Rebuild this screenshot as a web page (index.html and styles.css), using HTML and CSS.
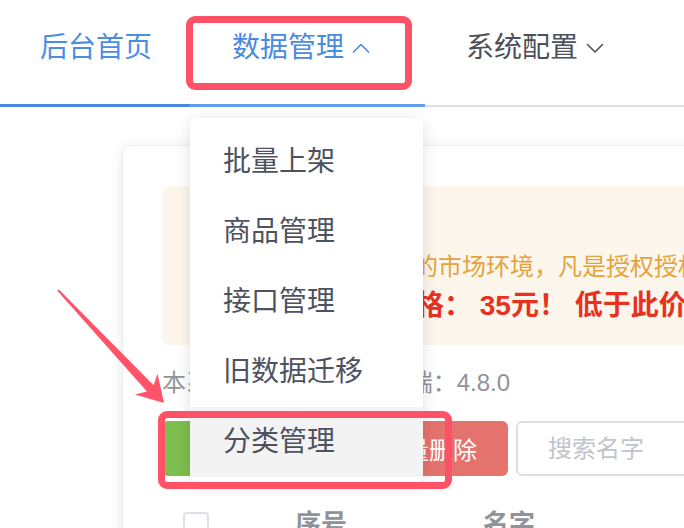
FILE: index.html
```html
<!DOCTYPE html>
<html lang="zh-CN">
<head>
<meta charset="utf-8">
<title>数据管理</title>
<link rel="stylesheet" href="styles.css">
</head>
<body>
<nav class="nav">
  <div class="tab tab-home">后台首页</div>
  <div class="tab tab-data">数据管理<svg class="chev" viewBox="0 0 18 10" width="18" height="10"><polyline points="1.5,9 9,1.5 16.5,9"/></svg></div>
  <div class="tab tab-sys">系统配置<svg class="chev" viewBox="0 0 18 10" width="18" height="10"><polyline points="1.5,1.5 9,9 16.5,1.5"/></svg></div>
</nav>

<main class="main">
  <section class="card">
    <div class="alert">
      <p class="alert-line">为维护正版授权用户的市场环境，凡是授权授权用户均可享受免费升级服务</p>
      <p class="alert-strong">本系统最低授权价格： 35元！ 低于此价格均为盗版</p>
    </div>
    <p class="version">本系统版本号 当前客户端：4.8.0</p>
    <div class="toolbar">
      <button class="btn btn-green">批量上架</button>
      <button class="btn btn-red">批量删除</button>
      <input class="search" type="text" placeholder="搜索名字">
    </div>
    <div class="thead">
      <span class="checkbox"></span>
      <span class="th th-index">序号</span>
      <span class="th">名字</span>
    </div>
  </section>
</main>

<ul class="dropdown">
  <li class="dd-item">批量上架</li>
  <li class="dd-item">商品管理</li>
  <li class="dd-item">接口管理</li>
  <li class="dd-item">旧数据迁移</li>
  <li class="dd-item dd-item-hover">分类管理</li>
</ul>

<div class="mark mark-nav"></div>
<div class="mark mark-item"></div>
<svg class="arrow" viewBox="0 0 684 528" width="684" height="528">
  <polygon points="57.3,290.7 147.0,391.5 134.9,394.6 164,403 157.5,373.4 153.6,385.3 58.7,289.3"/>
</svg>
</body>
</html>
```

FILE: styles.css
```css
* { box-sizing: border-box; }

html, body {
  margin: 0;
  padding: 0;
}

body {
  width: 684px;
  height: 528px;
  overflow: hidden;
  position: relative;
  background: #ffffff;
  font-family: "Liberation Sans", "Noto Sans CJK SC", sans-serif;
  color: #4c505a;
}

p { margin: 0; }

/* ---------- top nav ---------- */
.nav {
  display: flex;
  height: 107px;
}

.tab {
  height: 107px;
  display: flex;
  align-items: center;
  font-size: 28px;
  line-height: 40px;
  padding-bottom: 8px;
  white-space: nowrap;
}

.tab-home {
  width: 190px;
  padding-left: 40px;
  color: #4a8ee4;
  border-bottom: 3px solid #4a87db;
}

.tab-data {
  width: 235px;
  padding-left: 42px;
  color: #4a8ae0;
  border-bottom: 3px solid #639ce8;
}

.tab-sys {
  flex: 1;
  padding-left: 41px;
  padding-bottom: 9px;
  color: #4c505a;
  border-bottom: 2px solid #e0e0e0;
}

.chev {
  margin-left: 8px;
  fill: none;
  stroke: currentColor;
  stroke-width: 1.6;
  stroke-linecap: round;
  stroke-linejoin: round;
}

/* ---------- card ---------- */
.main {
  padding: 38px 0 0 122px;
}

.card {
  width: 720px;
  height: 460px;
  background: #ffffff;
  border: 1px solid #ebeef5;
  border-radius: 8px;
  box-shadow: 0 2px 14px rgba(0, 0, 0, 0.09);
  padding: 40px 0 0 39px;
}

.alert {
  height: 159px;
  background: #fdf6ec;
  border-radius: 6px;
  padding: 61px 0 0 36px;
  white-space: nowrap;
  overflow: hidden;
}

.alert-line {
  font-size: 24px;
  line-height: 40px;
  color: #e6a23c;
}

.alert-strong {
  font-size: 28px;
  line-height: 38px;
  font-weight: bold;
  color: #e8311f;
  text-indent: -6px;
}

.version {
  margin-top: 23px;
  font-size: 24px;
  line-height: 30px;
  color: #909399;
  white-space: nowrap;
}

/* ---------- toolbar ---------- */
.toolbar {
  display: flex;
  margin-top: 23px;
  height: 55px;
}

.btn {
  flex: none;
  height: 55px;
  border: none;
  border-radius: 6px;
  font-family: inherit;
  font-size: 24px;
  color: #ffffff;
  display: flex;
  align-items: center;
  white-space: nowrap;
}

.btn-green {
  width: 184px;
  margin-right: 10px;
  background: #7dbf4e;
  justify-content: center;
}

.btn-red {
  width: 152px;
  margin-right: 8px;
  background: #e4736e;
  justify-content: flex-end;
  padding-right: 31px;
}

.search {
  flex: none;
  width: 300px;
  height: 55px;
  border: 2px solid #dcdfe6;
  border-radius: 6px;
  padding-left: 30px;
  font-family: inherit;
  font-size: 24px;
  color: #606266;
  outline: none;
}

.search::placeholder {
  color: #c0c4cc;
}

/* ---------- table head ---------- */
.thead {
  display: flex;
  align-items: flex-start;
  margin-top: 36px;
  padding-left: 21px;
}

.checkbox {
  flex: none;
  width: 26px;
  height: 26px;
  border: 2px solid #dcdfe6;
  border-radius: 4px;
  background: #ffffff;
  margin-right: 86px;
}

.th {
  font-size: 26px;
  line-height: 30px;
  margin-top: -3px;
  font-weight: bold;
  color: #909399;
}

.th-index {
  width: 188px;
}

/* ---------- dropdown ---------- */
.dropdown {
  position: absolute;
  left: 190px;
  top: 118px;
  width: 233px;
  margin: 0;
  padding: 9px 0 5px;
  list-style: none;
  background: #ffffff;
  border-radius: 6px;
  box-shadow: 0 3px 16px rgba(0, 0, 0, 0.13);
}

.dd-item {
  height: 70px;
  line-height: 70px;
  padding-left: 33px;
  font-size: 28px;
  color: #4d525e;
  white-space: nowrap;
}

.dd-item-hover {
  background: #f3f3f4;
}

/* ---------- annotations ---------- */
.mark {
  position: absolute;
  border: 7px solid #ff5267;
  border-radius: 9px;
}

.mark-nav {
  left: 186px;
  top: 16px;
  width: 226px;
  height: 74px;
}

.mark-item {
  left: 158px;
  top: 411px;
  width: 294px;
  height: 78px;
}

.arrow {
  position: absolute;
  left: 0;
  top: 0;
  fill: #ff5468;
}
```
